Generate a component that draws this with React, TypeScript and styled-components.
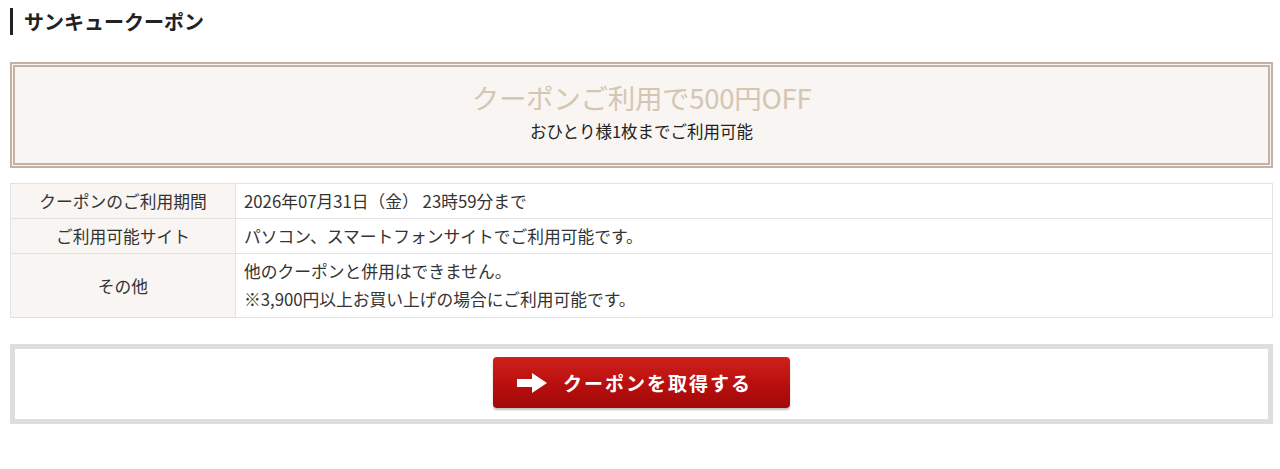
import React from 'react';
import styled, { createGlobalStyle } from 'styled-components';

const GlobalStyle = createGlobalStyle`
  body {
    margin: 0;
    background: #fff;
    font-family: 'Noto Sans CJK JP', 'Liberation Sans', sans-serif;
    color: #222;
  }
`;

const Page = styled.div`
  width: 1263px;
  padding: 8px 0 0 10px;
`;

const Heading = styled.h2`
  margin: 0;
  height: 27px;
  display: flex;
  align-items: center;
  border-left: 3px solid #222;
  padding-left: 11px;
  font-size: 20px;
  font-weight: 700;
  color: #222;
`;

const Banner = styled.div`
  margin-top: 27px;
  height: 106px;
  box-sizing: border-box;
  border: 5px double #c5b2a6;
  background: #f8f5f3;
  display: flex;
  flex-direction: column;
  align-items: center;
  justify-content: center;
  gap: 6px;
  padding-bottom: 6px;
`;

const BannerTitle = styled.div`
  font-size: 27.5px;
  line-height: 32px;
  color: #d4c6b0;
  letter-spacing: -0.3px;
`;

const BannerNote = styled.div`
  font-size: 16.5px;
  line-height: 24px;
  color: #222;
`;

const InfoTable = styled.table`
  margin-top: 15px;
  width: 100%;
  border-collapse: collapse;
  font-size: 16.75px;
  color: #333;
`;

const Label = styled.th`
  width: 208px;
  background: #f8f5f3;
  border: 1px solid #e2e2e2;
  font-weight: 400;
  text-align: center;
  padding: 3px 8px;
  line-height: 28px;
`;

const Value = styled.td<{ $multi?: boolean }>`
  border: 1px solid #e2e2e2;
  padding: ${(p) => (p.$multi ? '3px 8px 4px' : '3px 8px')};
  line-height: 28px;
`;

const ActionBox = styled.div`
  margin-top: 26px;
  height: 80px;
  box-sizing: border-box;
  border: 5px solid #dedede;
  display: flex;
  align-items: center;
  justify-content: center;
`;

const GetButton = styled.button`
  width: 297px;
  height: 51px;
  margin-bottom: 3px;
  border: none;
  border-radius: 4px;
  background: linear-gradient(#d0201b, #b80f0e 55%, #a00909);
  box-shadow: 0 2px 2px rgba(0, 0, 0, 0.25);
  color: #fff;
  font-family: inherit;
  font-size: 19px;
  font-weight: 700;
  letter-spacing: 2px;
  display: flex;
  align-items: center;
  justify-content: center;
  gap: 16px;
  padding: 0 14px 0 0;
  cursor: pointer;
`;

const ArrowIcon = () => (
  <svg width="30" height="20" viewBox="0 0 30 20">
    <path d="M0 6h15V0l15 10-15 10v-6H0z" fill="#fff" />
  </svg>
);

const rows: { label: string; lines: string[] }[] = [
  { label: 'クーポンのご利用期間', lines: ['2026年07月31日（金） 23時59分まで'] },
  { label: 'ご利用可能サイト', lines: ['パソコン、スマートフォンサイトでご利用可能です。'] },
  {
    label: 'その他',
    lines: ['他のクーポンと併用はできません。', '※3,900円以上お買い上げの場合にご利用可能です。'],
  },
];

function App() {
  return (
    <Page>
      <GlobalStyle />
      <Heading>サンキュークーポン</Heading>
      <Banner>
        <BannerTitle>クーポンご利用で500円OFF</BannerTitle>
        <BannerNote>おひとり様1枚までご利用可能</BannerNote>
      </Banner>
      <InfoTable>
        <tbody>
          {rows.map((row) => (
            <tr key={row.label}>
              <Label>{row.label}</Label>
              <Value $multi={row.lines.length > 1}>
                {row.lines.map((line) => (
                  <div key={line}>{line}</div>
                ))}
              </Value>
            </tr>
          ))}
        </tbody>
      </InfoTable>
      <ActionBox>
        <GetButton>
          <ArrowIcon />
          クーポンを取得する
        </GetButton>
      </ActionBox>
    </Page>
  );
}

export default App;
